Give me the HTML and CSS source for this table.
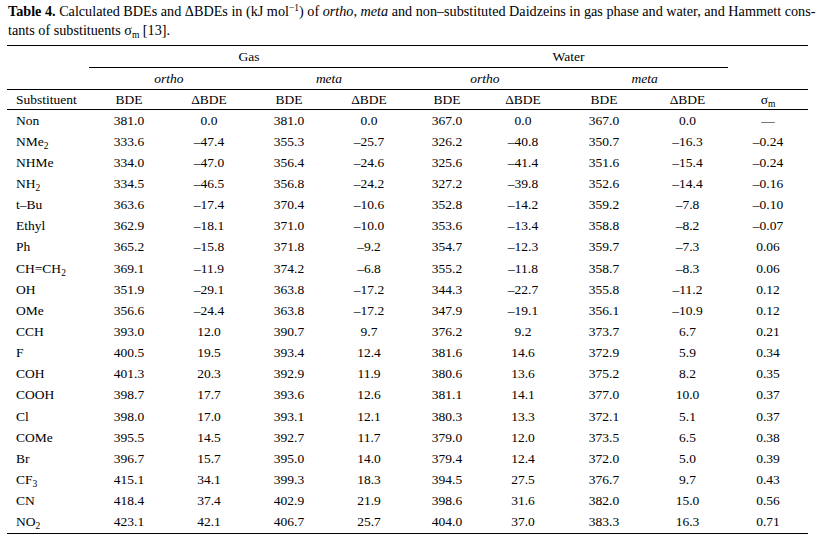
FILE: index.html
```html
<!DOCTYPE html>
<html lang="en">
<head>
<meta charset="utf-8">
<title>Table 4</title>
<link rel="stylesheet" href="styles.css">
</head>
<body>
<div class="page">
  <p class="caption"><b>Table 4.</b> Calculated BDEs and ΔBDEs in (kJ mol<sup>−1</sup>) of <i>ortho</i>, <i>meta</i> and non–substituted Daidzeins in gas phase and water, and Hammett cons-<br>tants of substituents σ<sub>m</sub> [13].</p>
  <table class="data">
    <colgroup>
      <col class="c-sub">
      <col class="c80"><col class="c80"><col class="c80"><col class="c80">
      <col class="c76"><col class="c76"><col class="c86"><col class="c81">
      <col class="c80">
    </colgroup>
    <thead>
      <tr class="h1">
        <th></th>
        <th colspan="4" class="grp">Gas</th>
        <th colspan="4" class="grp">Water</th>
        <th></th>
      </tr>
      <tr class="h2">
        <th></th>
        <th colspan="2"><i>ortho</i></th>
        <th colspan="2"><i>meta</i></th>
        <th colspan="2"><i>ortho</i></th>
        <th colspan="2"><i>meta</i></th>
        <th></th>
      </tr>
      <tr class="h3">
        <th class="name">Substituent</th>
        <th>BDE</th><th>ΔBDE</th><th>BDE</th><th>ΔBDE</th>
        <th>BDE</th><th>ΔBDE</th><th>BDE</th><th>ΔBDE</th>
        <th>σ<sub>m</sub></th>
      </tr>
    </thead>
    <tbody>
      <tr><td class="name">Non</td><td>381.0</td><td>0.0</td><td>381.0</td><td>0.0</td><td>367.0</td><td>0.0</td><td>367.0</td><td>0.0</td><td>—</td></tr>
      <tr><td class="name">NMe<sub>2</sub></td><td>333.6</td><td>–47.4</td><td>355.3</td><td>–25.7</td><td>326.2</td><td>–40.8</td><td>350.7</td><td>–16.3</td><td>–0.24</td></tr>
      <tr><td class="name">NHMe</td><td>334.0</td><td>–47.0</td><td>356.4</td><td>–24.6</td><td>325.6</td><td>–41.4</td><td>351.6</td><td>–15.4</td><td>–0.24</td></tr>
      <tr><td class="name">NH<sub>2</sub></td><td>334.5</td><td>–46.5</td><td>356.8</td><td>–24.2</td><td>327.2</td><td>–39.8</td><td>352.6</td><td>–14.4</td><td>–0.16</td></tr>
      <tr><td class="name">t–Bu</td><td>363.6</td><td>–17.4</td><td>370.4</td><td>–10.6</td><td>352.8</td><td>–14.2</td><td>359.2</td><td>–7.8</td><td>–0.10</td></tr>
      <tr><td class="name">Ethyl</td><td>362.9</td><td>–18.1</td><td>371.0</td><td>–10.0</td><td>353.6</td><td>–13.4</td><td>358.8</td><td>–8.2</td><td>–0.07</td></tr>
      <tr><td class="name">Ph</td><td>365.2</td><td>–15.8</td><td>371.8</td><td>–9.2</td><td>354.7</td><td>–12.3</td><td>359.7</td><td>–7.3</td><td>0.06</td></tr>
      <tr><td class="name">CH=CH<sub>2</sub></td><td>369.1</td><td>–11.9</td><td>374.2</td><td>–6.8</td><td>355.2</td><td>–11.8</td><td>358.7</td><td>–8.3</td><td>0.06</td></tr>
      <tr><td class="name">OH</td><td>351.9</td><td>–29.1</td><td>363.8</td><td>–17.2</td><td>344.3</td><td>–22.7</td><td>355.8</td><td>–11.2</td><td>0.12</td></tr>
      <tr><td class="name">OMe</td><td>356.6</td><td>–24.4</td><td>363.8</td><td>–17.2</td><td>347.9</td><td>–19.1</td><td>356.1</td><td>–10.9</td><td>0.12</td></tr>
      <tr><td class="name">CCH</td><td>393.0</td><td>12.0</td><td>390.7</td><td>9.7</td><td>376.2</td><td>9.2</td><td>373.7</td><td>6.7</td><td>0.21</td></tr>
      <tr><td class="name">F</td><td>400.5</td><td>19.5</td><td>393.4</td><td>12.4</td><td>381.6</td><td>14.6</td><td>372.9</td><td>5.9</td><td>0.34</td></tr>
      <tr><td class="name">COH</td><td>401.3</td><td>20.3</td><td>392.9</td><td>11.9</td><td>380.6</td><td>13.6</td><td>375.2</td><td>8.2</td><td>0.35</td></tr>
      <tr><td class="name">COOH</td><td>398.7</td><td>17.7</td><td>393.6</td><td>12.6</td><td>381.1</td><td>14.1</td><td>377.0</td><td>10.0</td><td>0.37</td></tr>
      <tr><td class="name">Cl</td><td>398.0</td><td>17.0</td><td>393.1</td><td>12.1</td><td>380.3</td><td>13.3</td><td>372.1</td><td>5.1</td><td>0.37</td></tr>
      <tr><td class="name">COMe</td><td>395.5</td><td>14.5</td><td>392.7</td><td>11.7</td><td>379.0</td><td>12.0</td><td>373.5</td><td>6.5</td><td>0.38</td></tr>
      <tr><td class="name">Br</td><td>396.7</td><td>15.7</td><td>395.0</td><td>14.0</td><td>379.4</td><td>12.4</td><td>372.0</td><td>5.0</td><td>0.39</td></tr>
      <tr><td class="name">CF<sub>3</sub></td><td>415.1</td><td>34.1</td><td>399.3</td><td>18.3</td><td>394.5</td><td>27.5</td><td>376.7</td><td>9.7</td><td>0.43</td></tr>
      <tr><td class="name">CN</td><td>418.4</td><td>37.4</td><td>402.9</td><td>21.9</td><td>398.6</td><td>31.6</td><td>382.0</td><td>15.0</td><td>0.56</td></tr>
      <tr><td class="name">NO<sub>2</sub></td><td>423.1</td><td>42.1</td><td>406.7</td><td>25.7</td><td>404.0</td><td>37.0</td><td>383.3</td><td>16.3</td><td>0.71</td></tr>
    </tbody>
  </table>
</div>
</body>
</html>
```

FILE: styles.css
```css
html, body {
  margin: 0;
  padding: 0;
  background: #fff;
}

body {
  font-family: "Liberation Serif", "Times New Roman", serif;
  font-size: 13.5px;
  color: #000;
}

.page {
  padding: 2px 10px 0 7px;
}

.caption {
  margin: 0 0 5px 1px;
  font-size: 14.2px;
  line-height: 19px;
  white-space: nowrap;
}

.caption sup {
  font-size: 9.5px;
  line-height: 0;
  vertical-align: 5px;
}

sub {
  font-size: 9.5px;
  line-height: 0;
  vertical-align: -3px;
}

.data {
  border-collapse: collapse;
  table-layout: fixed;
  width: 801px;
  border-top: 1px solid #000;
  border-bottom: 1px solid #000;
}

.c-sub { width: 82px; }
.c80 { width: 80px; }
.c76 { width: 76px; }
.c86 { width: 86px; }
.c81 { width: 81px; }

.data th,
.data td {
  padding: 0;
  text-align: center;
  font-weight: normal;
  white-space: nowrap;
}

.data .name {
  text-align: left;
  padding-left: 9px;
}

.h1 th {
  height: 21px;
}

.h1 .grp {
  border-bottom: 1px solid #000;
}

.h2 th {
  height: 21px;
  border-bottom: 1px solid #000;
}

.h3 th {
  height: 19px;
  border-bottom: 1px solid #000;
}

.data tbody td {
  height: 21.15px;
}
```
